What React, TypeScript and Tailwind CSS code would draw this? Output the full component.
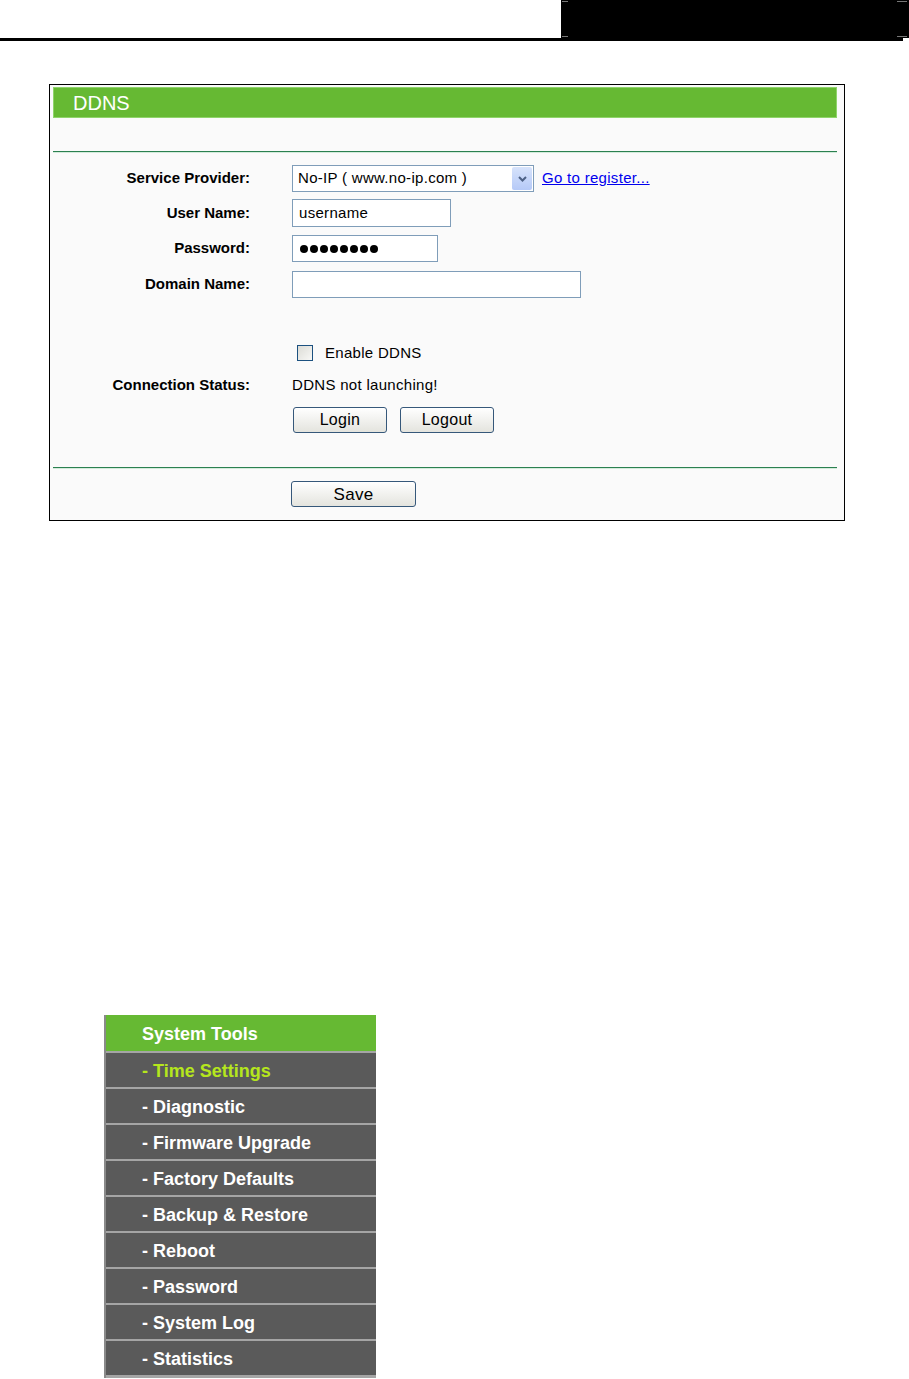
import React from "react";

const menuItems = [
  "Time Settings",
  "Diagnostic",
  "Firmware Upgrade",
  "Factory Defaults",
  "Backup & Restore",
  "Reboot",
  "Password",
  "System Log",
  "Statistics",
];

const btn =
  "h-[26px] rounded-[3px] border border-[#36587a] bg-gradient-to-b from-[#ffffff] to-[#e4e4de] text-[16px] tracking-[0.3px] text-black leading-none";

function Row({ label, children, className = "" }: { label?: string; children: React.ReactNode; className?: string }) {
  return (
    <div className={`flex items-center ${className}`}>
      <div className="w-[197px] shrink-0 text-right text-[15px] font-bold text-black">{label}</div>
      <div className="ml-[42px] flex items-center text-[15px] tracking-[0.3px]">{children}</div>
    </div>
  );
}

export default function App() {
  return (
    <div className="min-h-[1379px] w-[909px] overflow-hidden bg-white font-['Liberation_Sans',Arial,sans-serif]">
      {/* page header strip */}
      <div className="flex h-[38px]">
        <div className="flex-1" />
        <div className="relative w-[348px] bg-black">
          <span className="absolute left-[1px] top-[1px] h-px w-[6px] bg-[#777]" />
          <span className="absolute left-[1px] bottom-[1px] h-px w-[6px] bg-[#777]" />
          <span className="absolute right-[2px] top-[1px] h-px w-[10px] bg-[#777]" />
          <span className="absolute right-[2px] bottom-[1px] h-px w-[10px] bg-[#777]" />
        </div>
      </div>
      <div className="h-[3px] w-[903px] bg-black" />

      {/* DDNS panel */}
      <div className="ml-[49px] mt-[43px] h-[437px] w-[796px] border border-black bg-[#fafafa] pl-[3px] pr-[7px] pt-[2px]">
        <div className="flex h-[31px] items-center border border-[#8fd46a] bg-[#66b933] pl-[19px] text-[20px] text-white">
          DDNS
        </div>
        <div className="mt-[33px] h-[2px] border-t border-[#2b8050] bg-[#d3ebdb]" />

        <Row label="Service Provider:" className="mt-[12px] h-[27px]">
          <div className="flex h-[27px] w-[242px] items-center justify-between border border-[#7f9db9] bg-white pl-[5px] pr-px text-black">
            <span>No-IP ( www.no-ip.com )</span>
            <span className="flex h-[23px] w-[20px] items-center justify-center rounded-[2px] bg-gradient-to-b from-[#d7e3fb] to-[#b5c9f7]">
              <svg width="9" height="6" viewBox="0 0 9 6">
                <path d="M1 1l3.5 3.5L8 1" fill="none" stroke="#4d6185" strokeWidth="2" />
              </svg>
            </span>
          </div>
          <a href="#" className="ml-[8px] text-[#0000ee] underline">
            Go to register...
          </a>
        </Row>

        <Row label="User Name:" className="mt-[7px] h-[28px]">
          <div className="flex h-[28px] w-[159px] items-center border border-[#7f9db9] bg-white pl-[6px] text-black">
            username
          </div>
        </Row>

        <Row label="Password:" className="mt-[8px] h-[27px]">
          <div className="flex h-[27px] w-[146px] items-center gap-[2px] border border-[#7f9db9] bg-white pl-[7px]">
            {Array.from({ length: 8 }).map((_, i) => (
              <span key={i} className="h-[8px] w-[8px] rounded-full bg-black" />
            ))}
          </div>
        </Row>

        <Row label="Domain Name:" className="mt-[9px] h-[27px]">
          <div className="h-[27px] w-[289px] border border-[#7f9db9] bg-white" />
        </Row>

        <Row className="mt-[46px] h-[18px]">
          <span className="ml-[5px] h-[16px] w-[16px] border border-[#1c5180] bg-gradient-to-br from-[#dcdcd6] to-[#f8f8f6]" />
          <span className="ml-[12px] text-black">Enable DDNS</span>
        </Row>

        <Row label="Connection Status:" className="mt-[14px] h-[18px]">
          <span className="text-black">DDNS not launching!</span>
        </Row>

        <Row className="mt-[13px] h-[26px]">
          <button className={`${btn} ml-px w-[94px]`}>Login</button>
          <button className={`${btn} ml-[13px] w-[94px]`}>Logout</button>
        </Row>

        <div className="mt-[34px] h-[2px] border-t border-[#2b8050] bg-[#d3ebdb]" />

        <Row className="mt-[12px] h-[26px]">
          <button className={`${btn} -ml-px w-[125px] text-[17px]`}>Save</button>
        </Row>
      </div>

      {/* System Tools menu */}
      <div className="ml-[104px] mt-[494px] w-[272px] border-l-2 border-[#8a8a8a] text-[18px] font-bold">
        <div className="flex h-[36px] items-center bg-[#66b933] pl-[36px] pt-[3px] text-white">System Tools</div>
        {menuItems.map((item, i) => (
          <div key={item}>
            <div className="h-[2px] bg-[#a5a5a5]" />
            <div
              className={`flex h-[34px] items-center bg-[#5a5a5a] pl-[36px] pt-[3px] ${
                i === 0 ? "text-[#b5e61d]" : "text-white"
              }`}
            >
              - {item}
            </div>
          </div>
        ))}
        <div className="h-[3px] bg-[#a5a5a5]" />
      </div>
    </div>
  );
}
